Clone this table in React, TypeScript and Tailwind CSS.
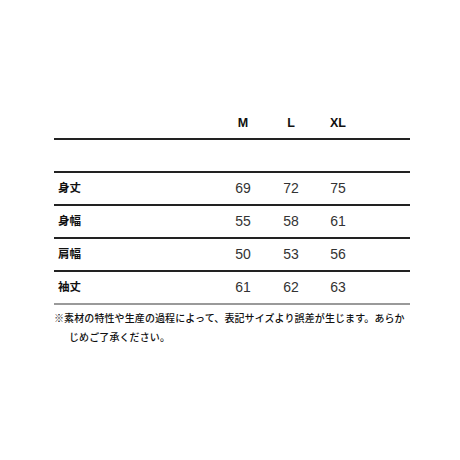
import React from "react";

const rows: [string, string, string, string][] = [
  ["身丈", "69", "72", "75"],
  ["身幅", "55", "58", "61"],
  ["肩幅", "50", "53", "56"],
  ["袖丈", "61", "62", "63"],
];

const font = { fontFamily: '"Liberation Sans", "Noto Sans CJK JP", sans-serif' };

export default function App() {
  return (
    <div className="w-[460px] h-[460px] bg-white pt-[108px] pl-[54px]" style={font}>
      <div className="w-[356px]">
        <div className="flex h-[32px] items-center border-b-2 border-[#222] text-[12.5px] font-bold text-[#111]">
          <div className="w-[165px]" />
          <div className="w-[48px] text-center">M</div>
          <div className="w-[48px] text-center">L</div>
          <div className="w-[46px] text-center">XL</div>
        </div>
        <div className="h-[33px] border-b-2 border-[#222]" />
        {rows.map((r, i) => (
          <div
            key={r[0]}
            className={`flex h-[33px] items-center border-b-2 ${i === rows.length - 1 ? "border-[#9a9a9a]" : "border-[#222]"}`}
          >
            <div className="w-[165px] pl-[4px] text-[11.5px] font-bold text-[#111]">{r[0]}</div>
            <div className="w-[48px] text-center text-[14px] text-[#333]">{r[1]}</div>
            <div className="w-[48px] text-center text-[14px] text-[#333]">{r[2]}</div>
            <div className="w-[46px] text-center text-[14px] text-[#333]">{r[3]}</div>
          </div>
        ))}
        <div className="mt-[4px] text-[10px] leading-[19px] font-medium text-[#111] tracking-[0.1px]">
          <div className="whitespace-nowrap">※素材の特性や生産の過程によって、表記サイズより誤差が生じます。あらか</div>
          <div className="pl-[15px]">じめご了承ください。</div>
        </div>
      </div>
    </div>
  );
}
